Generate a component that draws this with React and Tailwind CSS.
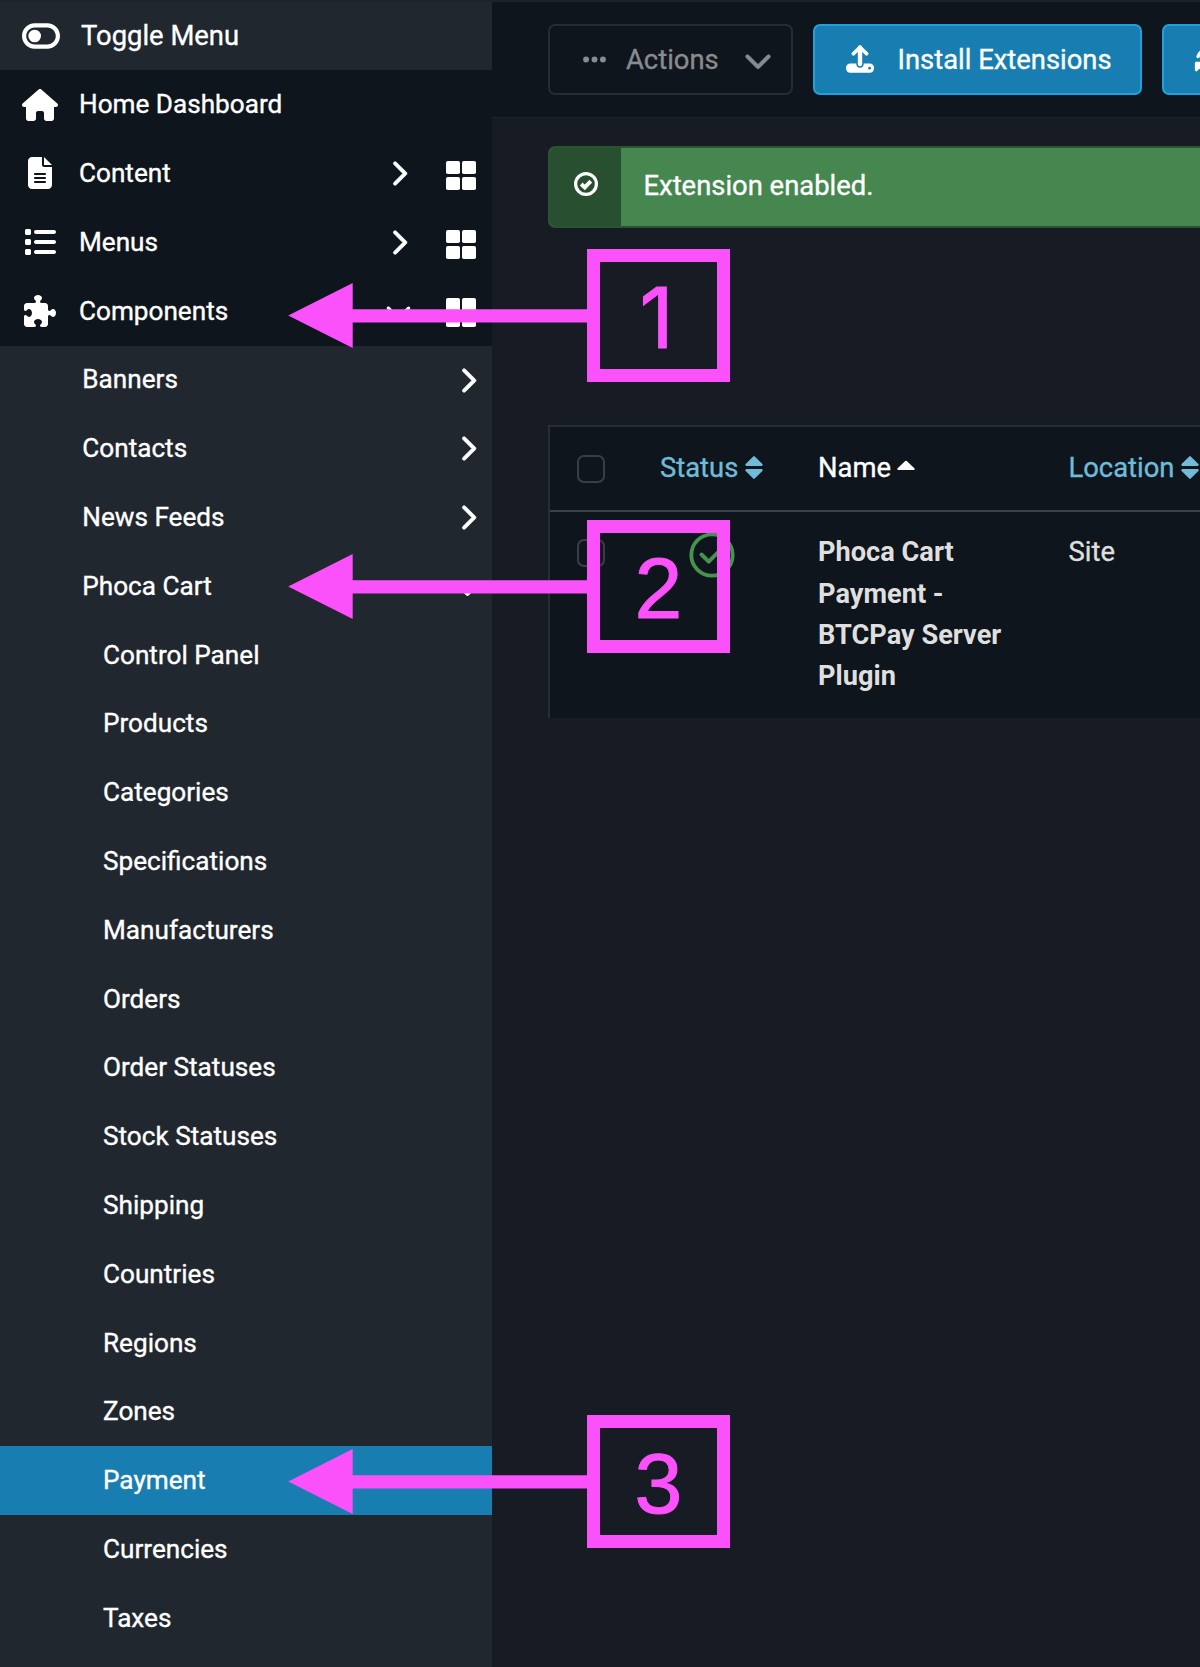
import React from "react";
import {
  FaToggleOff,
  FaHouse,
  FaFileLines,
  FaList,
  FaPuzzlePiece,
  FaChevronRight,
  FaChevronDown,
  FaEllipsis,
  FaRotate,
} from "react-icons/fa6";

const subItems = [
  "Control Panel",
  "Products",
  "Categories",
  "Specifications",
  "Manufacturers",
  "Orders",
  "Order Statuses",
  "Stock Statuses",
  "Shipping",
  "Countries",
  "Regions",
  "Zones",
  "Payment",
  "Currencies",
  "Taxes",
];

function GridIcon() {
  return (
    <svg viewBox="0 0 30 29" className="h-[29px] w-[30px]" fill="currentColor">
      <rect x="0" y="0" width="14" height="13" rx="1.8" />
      <rect x="16" y="0" width="14" height="13" rx="1.8" />
      <rect x="0" y="16" width="14" height="13" rx="1.8" />
      <rect x="16" y="16" width="14" height="13" rx="1.8" />
    </svg>
  );
}

function UploadIcon() {
  return (
    <svg viewBox="0 0 28 28" className="size-7 shrink-0" fill="none">
      <rect x="0" y="18.5" width="28" height="9.3" rx="4.2" fill="#fff" />
      <path d="M14 3v16" stroke="#187eb1" strokeWidth="7.4" strokeLinecap="round" />
      <path d="M14 2.5v16.5" stroke="#fff" strokeWidth="4.4" strokeLinecap="round" />
      <path d="M7.4 8.8 14 2.3l6.6 6.5" stroke="#fff" strokeWidth="3.6" strokeLinecap="round" strokeLinejoin="round" />
      <circle cx="23.6" cy="23.2" r="1.4" fill="#187eb1" />
    </svg>
  );
}

function AlertIcon() {
  return (
    <svg viewBox="0 0 24 24" className="size-6" fill="none" stroke="#fff">
      <circle cx="12" cy="12" r="10.4" strokeWidth="3.2" />
      <path d="m7.2 12 3.6 3.4 6-6.2" strokeWidth="3.9" />
    </svg>
  );
}

function SortIcon() {
  return (
    <svg viewBox="0 0 18 26" className="h-[26px] w-[18px]" fill="currentColor" stroke="currentColor" strokeLinejoin="round">
      <path d="M1.4 9.8 9 2.2l7.6 7.6Z" strokeWidth="2.2" />
      <path d="M1.4 15.2h15.2L9 22.8Z" strokeWidth="2.2" />
    </svg>
  );
}

function SortUpIcon() {
  return (
    <svg viewBox="0 0 18 26" className="h-[26px] w-[18px]" fill="currentColor" stroke="currentColor" strokeLinejoin="round">
      <path d="M1.4 14 9 6.8l7.6 7.2Z" strokeWidth="2.2" />
    </svg>
  );
}

function MenuRow({ icon, label, toggle }) {
  return (
    <li className="flex h-[68.8px] items-center">
      <span className="flex w-[79px] justify-center">{icon}</span>
      <span className="flex-1 pt-[0.4px]">{label}</span>
      {toggle && (
        <>
          <span className="mr-[31px] flex w-[30px] justify-center pt-[1px] text-[27px]">{toggle}</span>
          <span className="mr-[16.5px] pt-[4px]">
            <GridIcon />
          </span>
        </>
      )}
    </li>
  );
}

function SubRow({ label, toggle }) {
  return (
    <li className="flex h-[68.8px] items-center pl-[82.3px]">
      <span className="flex-1">{label}</span>
      <span className="mr-[9.5px] flex w-[30px] justify-center text-[27px]">{toggle}</span>
    </li>
  );
}

function Checkbox() {
  return <span className="block size-[28px] rounded-[7px] border-2 border-[#3a3d45]" />;
}

function Callout({ number, className, digit }) {
  return (
    <div className={"absolute left-[288px] flex h-[133px] w-[442px] items-center " + className}>
      <svg viewBox="0 0 299 65" className="h-[65px] w-[299px] shrink-0" fill="#fb51fb">
        <path d="M0.2 32.5 64.7 0v26.2H299v13.2H64.7V65Z" />
      </svg>
      <div className="flex h-[133px] w-[143px] items-center justify-center border-[13px] border-[#fb51fb] text-[86px] leading-none text-[#fb51fb]">
        <span className={digit}>{number}</span>
      </div>
    </div>
  );
}

export default function App() {
  return (
    <div className="relative flex h-[1667px] w-[1200px] overflow-hidden bg-[#171b23] font-[Roboto,sans-serif] text-white [-webkit-text-stroke:0.35px]">
      <aside className="flex w-[492px] shrink-0 flex-col bg-[#21272f] text-[26.15px]">
        <div className="flex h-[70.2px] items-center border-t-2 border-[#1c232a] text-[27.4px]">
          <span className="flex w-[81px] pl-[22px] text-[38px]">
            <FaToggleOff />
          </span>
          <span>Toggle Menu</span>
        </div>
        <ul className="bg-[#0e151c] pb-[0.3px]">
          <MenuRow icon={<FaHouse className="size-9" />} label="Home Dashboard" />
          <MenuRow icon={<FaFileLines className="size-8" />} label="Content" toggle={<FaChevronRight className="-ml-[2px]" stroke="currentColor" strokeWidth="14" />} />
          <MenuRow icon={<FaList className="size-8" />} label="Menus" toggle={<FaChevronRight className="-ml-[2px]" stroke="currentColor" strokeWidth="14" />} />
          <MenuRow icon={<FaPuzzlePiece className="size-8" />} label="Components" toggle={<FaChevronDown className="-ml-[3px]" />} />
        </ul>
        <ul>
          <SubRow label="Banners" toggle={<FaChevronRight stroke="currentColor" strokeWidth="14" />} />
          <SubRow label="Contacts" toggle={<FaChevronRight stroke="currentColor" strokeWidth="14" />} />
          <SubRow label="News Feeds" toggle={<FaChevronRight stroke="currentColor" strokeWidth="14" />} />
          <SubRow label="Phoca Cart" toggle={<FaChevronDown className="mt-[2px] -ml-px" />} />
        </ul>
        <ul>
          {subItems.map((item) => (
            <li
              key={item}
              className={"flex h-[68.8px] items-center pl-[103px] " + (item === "Payment" ? "bg-[#187eb1]" : "")}
            >
              {item}
            </li>
          ))}
        </ul>
      </aside>

      <main className="min-w-0 flex-1 text-[27.4px]">
        <div className="flex h-[118px] gap-[20px] overflow-hidden border-t-2 border-b border-[#1c222a] bg-[#0e151c] pt-[22px] pl-[56px]">
          <button className="flex h-[71px] w-[245px] shrink-0 items-center rounded-[7px] border-2 border-[#262c35] pl-[31px] text-[#898b8f]">
            <FaEllipsis className="size-[27px]" />
            <span className="ml-[18px] pt-[2px]">Actions</span>
            <FaChevronDown className="ml-[25px] size-[28px]" stroke="currentColor" strokeWidth="14" />
          </button>
          <button className="flex h-[71px] w-[329px] shrink-0 items-center rounded-[7px] border-2 border-[#22a0dc] bg-[#187eb1] pl-[31px]">
            <span className="mb-px">
              <UploadIcon />
            </span>
            <span className="ml-[23.5px] pt-[2px] whitespace-nowrap">Install Extensions</span>
          </button>
          <button className="flex h-[71px] w-[329px] shrink-0 items-center rounded-[7px] border-2 border-[#22a0dc] bg-[#187eb1] pl-[30px]">
            <FaRotate className="size-[28px]" />
          </button>
        </div>

        <div className="mt-[28px] ml-[56px] flex h-[82px] rounded-l-[7px] border-2 border-r-0 border-[#28552f] bg-[#45874f]">
          <span className="flex w-[71px] items-center justify-center rounded-l-[5px] bg-[#284f30] pb-[6px] pl-px">
            <AlertIcon />
          </span>
          <span className="flex items-center pl-[22.5px]">Extension enabled.</span>
        </div>

        <div className="mt-[197px] ml-[56px] h-[293px] border-t-2 border-l-2 border-[#272c35] bg-[#0e151c]">
          <div className="flex h-[85px] items-center border-b-2 border-[#3b3f49]">
            <span className="w-[110px] pl-[27px]">
              <Checkbox />
            </span>
            <span className="flex w-[158px] items-center gap-[7px] text-[#71bbd9]">
              <span>Status</span> <SortIcon />
            </span>
            <span className="flex w-[250.5px] items-center gap-[6.5px]">
              <span>Name</span> <SortUpIcon />
            </span>
            <span className="flex items-center gap-[6.5px] text-[#71bbd9]">
              <span>Location</span> <SortIcon />
            </span>
          </div>
          <div className="flex items-start leading-[41.25px] text-[#dfdfdf]">
            <span className="w-[110px] pt-[27px] pl-[27px]">
              <Checkbox />
            </span>
            <span className="w-[158px] pt-[19.5px] pl-[29px]">
              <svg viewBox="0 0 46 46" className="size-[46px]" fill="none" stroke="#45934f" strokeLinecap="round" strokeLinejoin="round">
                <circle cx="23" cy="23" r="20.7" strokeWidth="3.8" />
                <path d="m12.5 22.5 7.2 7.2 13-13" strokeWidth="4" />
              </svg>
            </span>
            <span className="w-[250.5px] pt-[20.3px] pr-[50px] text-[27.2px] font-bold [-webkit-text-stroke:0]">
              Phoca Cart Payment - BTCPay Server Plugin
            </span>
            <span className="pt-[20.3px]">Site</span>
          </div>
        </div>
      </main>

      <Callout number="1" className="top-[249px]" digit="-ml-1 pt-[4px] font-[Inter,sans-serif] text-[84px] [-webkit-text-stroke:1px]" />
      <Callout number="2" className="top-[520px]" digit="pt-[2px] font-['Liberation_Sans',sans-serif] [-webkit-text-stroke:1px]" />
      <Callout number="3" className="top-[1415px]" digit="pt-[2px] font-['Liberation_Sans',sans-serif] [-webkit-text-stroke:1px]" />
    </div>
  );
}
